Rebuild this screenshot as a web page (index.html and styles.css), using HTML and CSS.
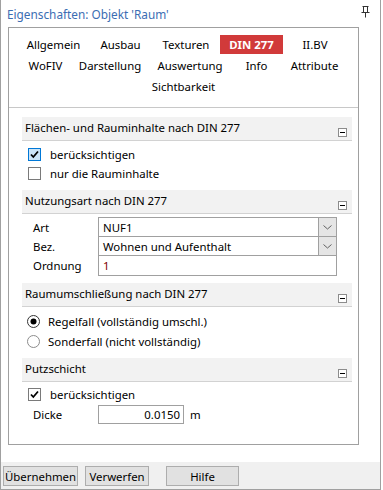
FILE: index.html
```html
<!DOCTYPE html>
<html lang="de">
<head>
    <meta charset="UTF-8">
    <title>Eigenschaften</title>
    <link rel="stylesheet" href="styles.css">
</head>
<body>
    <div class="window">
        <div class="titlebar">
            <span class="title">Eigenschaften: Objekt 'Raum'</span>
            <svg class="pin" width="9" height="12" viewBox="0 0 9 12">
                <path d="M1.5 0.5h6M2.5 0.5v6M6.5 0.5v6M0.5 6.5h8M4.5 6.5v5" stroke="#333" stroke-width="1" fill="none"/>
            </svg>
        </div>

        <div class="panel">
            <div class="tabs">
                <div class="tab-row">
                    <span class="tab w67">Allgemein</span>
                    <span class="tab w67">Ausbau</span>
                    <span class="tab w64">Texturen</span>
                    <span class="tab active">DIN 277</span>
                    <span class="tab w64">II.BV</span>
                </div>
                <div class="tab-row">
                    <span class="tab w64">WoFIV</span>
                    <span class="tab w65">Darstellung</span>
                    <span class="tab w95">Auswertung</span>
                    <span class="tab w38">Info</span>
                    <span class="tab w78">Attribute</span>
                </div>
                <div class="tab-row">
                    <span class="tab">Sichtbarkeit</span>
                </div>
            </div>

            <div class="sections">
                <div class="section">
                    <div class="section-head">
                        <span>Flächen- und Rauminhalte nach DIN 277</span>
                        <svg class="collapse" width="9" height="9" viewBox="0 0 9 9"><rect x="0.5" y="0.5" width="8" height="8" fill="#fff" stroke="#8c8c8c"/><path d="M2 4.5h5" stroke="#000"/></svg>
                    </div>
                    <div class="section-body">
                        <div class="check-row">
                            <span class="box box-focus"><svg width="11" height="11" viewBox="0 0 11 11"><path d="M2 5.5l2.3 2.5l4.7-5.5" stroke="#000" stroke-width="1.8" fill="none"/></svg></span>
                            <span>berücksichtigen</span>
                        </div>
                        <div class="check-row">
                            <span class="box"></span>
                            <span>nur die Rauminhalte</span>
                        </div>
                    </div>
                </div>

                <div class="section">
                    <div class="section-head">
                        <span>Nutzungsart nach DIN 277</span>
                        <svg class="collapse" width="9" height="9" viewBox="0 0 9 9"><rect x="0.5" y="0.5" width="8" height="8" fill="#fff" stroke="#8c8c8c"/><path d="M2 4.5h5" stroke="#000"/></svg>
                    </div>
                    <div class="section-body form-body">
                        <div class="field-row">
                            <span class="field-label">Art</span>
                            <div class="combo">
                                <span class="combo-text">NUF1</span>
                                <span class="combo-btn"><svg width="9" height="5" viewBox="0 0 9 5"><path d="M0.5 0.5l4 3.5l4-3.5" stroke="#606060" fill="none"/></svg></span>
                            </div>
                        </div>
                        <div class="field-row">
                            <span class="field-label">Bez.</span>
                            <div class="combo">
                                <span class="combo-text">Wohnen und Aufenthalt</span>
                                <span class="combo-btn"><svg width="9" height="5" viewBox="0 0 9 5"><path d="M0.5 0.5l4 3.5l4-3.5" stroke="#606060" fill="none"/></svg></span>
                            </div>
                        </div>
                        <div class="field-row">
                            <span class="field-label">Ordnung</span>
                            <div class="combo combo-tall">
                                <span class="combo-text value-red">1</span>
                            </div>
                        </div>
                    </div>
                </div>

                <div class="section">
                    <div class="section-head">
                        <span>Raumumschließung nach DIN 277</span>
                        <svg class="collapse" width="9" height="9" viewBox="0 0 9 9"><rect x="0.5" y="0.5" width="8" height="8" fill="#fff" stroke="#8c8c8c"/><path d="M2 4.5h5" stroke="#000"/></svg>
                    </div>
                    <div class="section-body">
                        <div class="radio-row">
                            <svg class="radio" width="13" height="13" viewBox="0 0 13 13"><circle cx="6.5" cy="6.5" r="6" fill="#fff" stroke="#333"/><circle cx="6.5" cy="6.5" r="3" fill="#000"/></svg>
                            <span>Regelfall (vollständig umschl.)</span>
                        </div>
                        <div class="radio-row">
                            <svg class="radio" width="13" height="13" viewBox="0 0 13 13"><circle cx="6.5" cy="6.5" r="6" fill="#fff" stroke="#8c8c8c"/></svg>
                            <span>Sonderfall (nicht vollständig)</span>
                        </div>
                    </div>
                </div>

                <div class="section">
                    <div class="section-head">
                        <span>Putzschicht</span>
                        <svg class="collapse" width="9" height="9" viewBox="0 0 9 9"><rect x="0.5" y="0.5" width="8" height="8" fill="#fff" stroke="#8c8c8c"/><path d="M2 4.5h5" stroke="#000"/></svg>
                    </div>
                    <div class="section-body putz-body">
                        <div class="check-row">
                            <span class="box"><svg width="11" height="11" viewBox="0 0 11 11"><path d="M2 5.5l2.3 2.5l4.7-5.5" stroke="#000" stroke-width="1.8" fill="none"/></svg></span>
                            <span>berücksichtigen</span>
                        </div>
                        <div class="field-row dicke-row">
                            <span class="field-label">Dicke</span>
                            <span class="num-input">0.0150</span>
                            <span class="unit">m</span>
                        </div>
                    </div>
                </div>
            </div>
        </div>

        <div class="buttonbar">
            <button class="btn btn-apply">Übernehmen</button>
            <button class="btn btn-discard">Verwerfen</button>
            <button class="btn btn-help">Hilfe</button>
        </div>
    </div>
</body>
</html>
```

FILE: styles.css
```css
body {
    margin: 0;
    background: #fff;
    font-family: "Noto Sans", "Open Sans", sans-serif;
    font-size: 11.4px;
    color: #000;
}
.window {
    width: 381px;
    height: 490px;
    box-sizing: border-box;
    border: 1px solid #a0a0a0;
    border-top: none;
    display: flex;
    flex-direction: column;
}
.titlebar {
    height: 27px;
    display: flex;
    align-items: center;
    justify-content: space-between;
    padding: 0 10px 0 6px;
}
.title {
    color: #3b6db3;
    font-size: 11.8px;
}
.pin {
    margin-top: -3px;
}
.panel {
    height: 418px;
    box-sizing: border-box;
    margin: 0 21px 0 7px;
    border: 1px solid #a0a0a0;
}
.tabs {
    padding: 7px 0 11px;
    border-bottom: 1px solid #c8c8c8;
    display: flex;
    flex-direction: column;
    gap: 2px;
}
.tab-row {
    display: flex;
    justify-content: center;
    height: 19px;
}
.tab {
    display: flex;
    align-items: center;
    justify-content: center;
    height: 19px;
}
.w38 { width: 38px; }
.w64 { width: 64px; }
.w65 { width: 65px; }
.w67 { width: 67px; }
.w78 { width: 78px; }
.w95 { width: 95px; }
.tab.active {
    width: 63px;
    margin-left: 2px;
    background: #d13a3a;
    color: #fff;
    font-weight: bold;
}
.sections {
    padding: 9px 6px 0 13px;
}
.section-head {
    height: 23px;
    background: #f2f2f2;
    border-bottom: 1px solid #d2d2d2;
    display: flex;
    justify-content: space-between;
    padding: 0 5px 0 3px;
    line-height: 22px;
}
.collapse {
    margin-top: 11px;
}
.section-body {
    padding: 4px 0 7px 6px;
}
.form-body {
    padding: 3px 0 7px 0;
}
.putz-body {
    padding: 3px 0 0 6px;
}
.check-row {
    height: 19px;
    display: flex;
    align-items: center;
    gap: 9px;
}
.box {
    width: 13px;
    height: 13px;
    box-sizing: border-box;
    border: 1px solid #7a7a7a;
    background: #fff;
    display: flex;
    align-items: center;
    justify-content: center;
}
.box-focus {
    border-color: #0078d7;
    background: #cce4f7;
}
.radio-row {
    height: 20px;
    display: flex;
    align-items: center;
    gap: 8px;
}
.radio {
    margin-left: -1px;
}
.field-row {
    display: flex;
    align-items: center;
}
.field-row + .field-row {
    margin-top: -1px;
}
.field-label {
    width: 65px;
    padding-left: 11px;
}
.combo {
    width: 239px;
    height: 20px;
    box-sizing: border-box;
    border: 1px solid #a0a0a0;
    display: flex;
    align-items: center;
}
.combo-tall {
    height: 21px;
}
.combo-text {
    flex: 1;
    padding-left: 4px;
}
.value-red {
    color: #800000;
}
.combo-btn {
    width: 18px;
    height: 18px;
    box-sizing: border-box;
    border-left: 1px solid #a0a0a0;
    background: #e5e5e5;
    display: flex;
    align-items: center;
    justify-content: center;
}
.dicke-row {
    margin-top: 1px;
    margin-left: -6px;
}
.num-input {
    width: 86px;
    height: 19px;
    box-sizing: border-box;
    border: 1px solid #a0a0a0;
    text-align: right;
    padding-right: 3px;
    line-height: 17px;
}
.unit {
    margin-left: 6px;
}
.buttonbar {
    margin-top: 17px;
    flex: 1;
    background: #f0f0f0;
    display: flex;
    align-items: flex-start;
    padding: 4px 0 0 2px;
}
.btn {
    height: 20px;
    box-sizing: border-box;
    border: 1px solid #adadad;
    background: #e1e1e1;
    font-family: inherit;
    font-size: 11.4px;
    color: #000;
    padding: 0;
}
.btn-apply { width: 75px; }
.btn-discard { width: 64px; margin-left: 7px; }
.btn-help { width: 73px; margin-left: 17px; }
```
